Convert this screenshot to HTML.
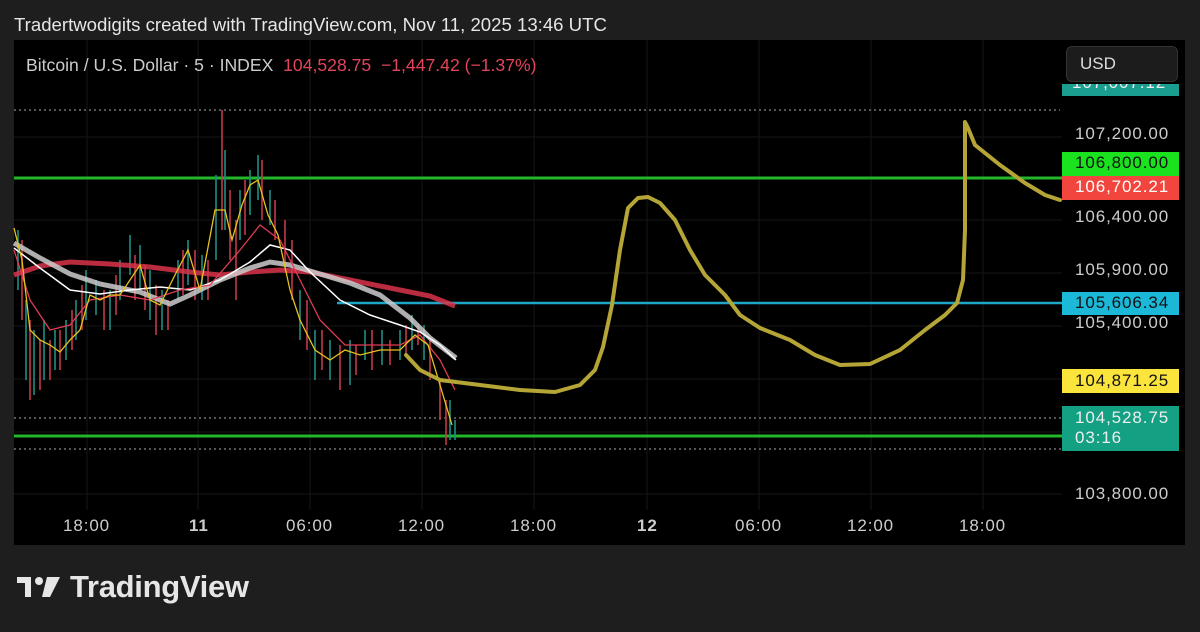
<!DOCTYPE html>
<html><head><meta charset="utf-8"><style>
html,body{margin:0;padding:0;background:#1e1e1e;width:1200px;height:632px;overflow:hidden;font-family:"Liberation Sans",sans-serif}
.t{position:absolute;white-space:nowrap}
.ax{font-size:17px;letter-spacing:0.9px}
</style></head><body>
<div class="t" style="left:14px;top:14px;font-size:18.6px;color:#e6e6e6">Tradertwodigits created with TradingView.com, Nov 11, 2025 13:46 UTC</div>
<div style="position:absolute;left:14px;top:40px;width:1171px;height:505px;background:#000"></div>
<svg width="1200" height="632" style="position:absolute;left:0;top:0">
<g stroke="#161616" stroke-width="1">
<path d="M87 40V510M198 40V510M310 40V510M422 40V510M534 40V510M647 40V510M759 40V510M871 40V510M983 40V510"/>
<path d="M14 137H1062M14 220H1062M14 273H1062M14 326H1062M14 379H1062M14 432H1062M14 494H1062"/>
</g>
<g stroke="#888" stroke-width="1.2" stroke-dasharray="2 3">
<path d="M14 110H1060M14 418H1062M14 449H1062"/>
</g>
<path d="M14 178H1062" stroke="#22b62a" stroke-width="3"/>
<path d="M14 436H1062" stroke="#22b62a" stroke-width="3"/>
<path d="M337 303H1062" stroke="#1fa5c6" stroke-width="2.5"/>
<g stroke-width="1.6">
<path stroke="#1f8f85" d="M18 230V290M26 300V380M34 330V395M44 320V380M55 330V370M66 320V360M76 300V340M86 270V320M96 280V315M110 290V330M120 260V300M130 235V275M140 245V290M150 270V320M162 290V330M178 260V300M188 240V285M202 255V300M216 175V260M225 150V230M240 190V240M250 170V215M258 155V200M270 190V225M300 290V340M315 330V380M330 340V380M350 340V385M365 330V360M382 330V365M400 330V360M412 315V350M424 325V360M450 400V440M455 420V440"/>
<path stroke="#c2394a" d="M22 240V320M30 320V400M40 340V390M50 340V380M60 330V370M72 310V350M82 285V330M104 290V330M116 275V315M135 255V300M145 265V310M156 285V335M168 300V330M183 250V295M195 250V300M208 260V300M222 110V230M230 190V260M236 220V300M245 180V235M262 160V220M275 200V240M285 220V270M292 240V300M307 300V350M322 330V370M340 345V390M356 345V375M372 330V370M390 340V365M406 325V355M418 325V345M430 340V380M440 380V420M446 400V445"/>
</g>
<polyline fill="none" stroke="#d9324a" stroke-width="5" opacity=".85" points="14,275 40,266 70,262 110,264 150,267 190,272 220,275 250,272 280,270 310,272 350,280 400,290 430,296 455,306"/>
<polyline fill="none" stroke="#ccc" stroke-width="5" opacity=".85" points="14,243 40,258 70,274 100,284 140,292 170,304 190,295 220,280 250,268 270,262 290,265 320,274 350,283 380,295 410,318 430,338 456,358"/>
<polyline fill="none" stroke="#fff" stroke-width="1.5" points="14,248 40,268 70,290 100,294 130,290 160,287 190,290 220,280 250,262 270,245 290,250 310,272 340,300 370,315 400,325 420,332 440,345 456,360"/>
<polyline fill="none" stroke="#e03c55" stroke-width="1.3" points="14,250 30,300 50,330 70,325 90,300 120,295 150,300 180,290 210,285 240,250 260,225 280,240 300,280 320,320 345,345 370,345 400,345 420,335 440,360 455,390"/>
<polyline fill="none" stroke="#e8c21d" stroke-width="1.3" points="14,228 22,260 30,330 40,340 50,345 60,352 70,340 80,330 90,295 100,300 110,295 120,295 130,280 140,265 150,300 160,305 175,275 188,250 200,290 215,210 225,210 232,240 242,205 250,185 258,180 268,215 278,235 290,290 300,320 315,350 330,360 345,350 360,355 380,350 400,350 415,335 428,345 440,385 452,425"/>
<polyline fill="none" stroke="#b5a536" stroke-width="4" stroke-linecap="round" stroke-linejoin="round" points="406,355 420,370 440,380 480,385 520,390 555,392 580,385 595,370 603,347 612,305 620,250 628,208 638,198 648,197 660,203 675,220 690,250 705,275 725,295 740,315 760,328 790,340 815,355 840,365 870,364 900,350 925,330 945,315 957,303 963,280 965,230 965,122 968,128 975,145 1000,165 1025,183 1045,195 1060,200"/>
</svg>
<div style="position:absolute;left:1066px;top:46px;width:112px;height:36px;background:#1c1c1c;border:1px solid #333;border-radius:6px;box-sizing:border-box"></div>
<div class="t" style="left:1080px;top:54px;font-size:17px;color:#ddd">USD</div>
<div style="position:absolute;left:1062px;top:84px;width:117px;height:12px;background:#1a9e8f;overflow:hidden"><div class="t ax" style="left:10px;top:-11px;color:#eee">107,007.12</div></div>
<div class="t ax" style="left:1075px;top:124px;color:#ccc">107,200.00</div>
<div style="position:absolute;left:1062px;top:152px;width:117px;height:24px;background:#1be21f"></div>
<div class="t ax" style="left:1075px;top:153px;color:#111">106,800.00</div>
<div style="position:absolute;left:1062px;top:176px;width:117px;height:24px;background:#f2453d"></div>
<div class="t ax" style="left:1075px;top:177px;color:#fff">106,702.21</div>
<div class="t ax" style="left:1075px;top:207px;color:#ccc">106,400.00</div>
<div class="t ax" style="left:1075px;top:260px;color:#ccc">105,900.00</div>
<div style="position:absolute;left:1062px;top:292px;width:117px;height:23px;background:#1cb8d8"></div>
<div class="t ax" style="left:1075px;top:293px;color:#111">105,606.34</div>
<div class="t ax" style="left:1075px;top:313px;color:#ccc">105,400.00</div>
<div style="position:absolute;left:1062px;top:369px;width:117px;height:24px;background:#fbe43b"></div>
<div class="t ax" style="left:1075px;top:371px;color:#111">104,871.25</div>
<div style="position:absolute;left:1062px;top:406px;width:117px;height:45px;background:#14a083"></div>
<div class="t ax" style="left:1075px;top:408px;color:#eee">104,528.75</div>
<div class="t ax" style="left:1075px;top:428px;color:#eee">03:16</div>
<div class="t ax" style="left:1075px;top:484px;color:#ccc">103,800.00</div>
<div class="t" style="left:26px;top:55px;font-size:17.6px;color:#ccc">Bitcoin / U.S. Dollar · 5 · INDEX <span style="color:#e0455a">&nbsp;104,528.75 &nbsp;−1,447.42 (−1.37%)</span></div>
<div style="position:absolute;left:0;top:516px;width:1060px;color:#ccc">
<span class="t ax" style="left:63px">18:00</span><span class="t ax" style="left:189px;font-weight:bold">11</span><span class="t ax" style="left:286px">06:00</span><span class="t ax" style="left:398px">12:00</span><span class="t ax" style="left:510px">18:00</span><span class="t ax" style="left:637px;font-weight:bold">12</span><span class="t ax" style="left:735px">06:00</span><span class="t ax" style="left:847px">12:00</span><span class="t ax" style="left:959px">18:00</span>
</div>
<svg width="46" height="22" style="position:absolute;left:17px;top:577px"><path d="M0 0H14V20H8V6H0Z" fill="#e6e6e6"/><circle cx="22" cy="4" r="4" fill="#e6e6e6"/><path d="M30 0H43L33 20H25Z" fill="#e6e6e6"/></svg>
<div class="t" style="left:70px;top:569px;font-size:31px;font-weight:bold;color:#e6e6e6;letter-spacing:-0.3px">TradingView</div>
</body></html>
